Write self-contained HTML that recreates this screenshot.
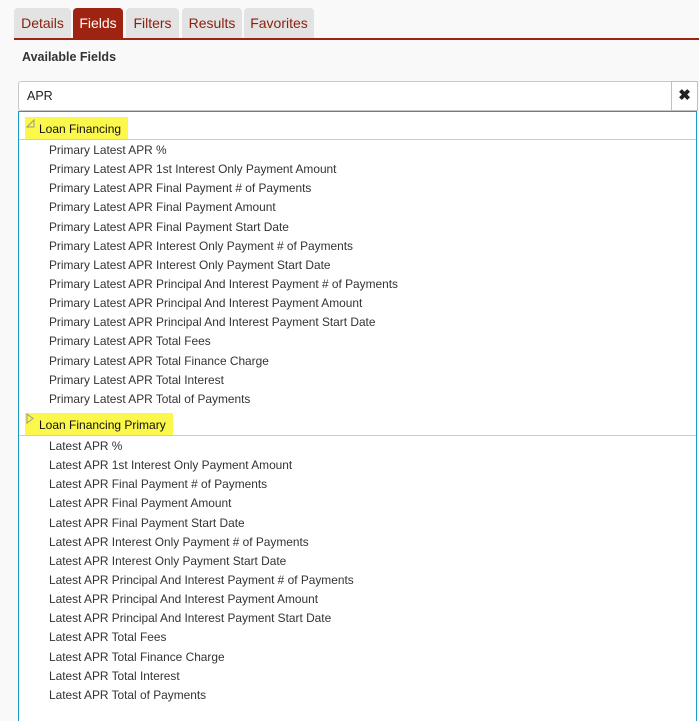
<!DOCTYPE html>
<html><head><style>
*{margin:0;padding:0;box-sizing:border-box}
body{width:699px;height:710px;overflow:hidden;background:#f9f9f9;font-family:"Liberation Sans",sans-serif;position:relative}
.tab{position:absolute;top:8px;height:30px;background:#e3e3e3;border-radius:4px 4px 0 0;color:#8b1f0e;font-size:14px;line-height:30px;text-align:center}
.tab.a{background:#9e2411;color:#fff}
.rule{position:absolute;left:14px;top:38px;width:685px;height:2px;background:#9e2411}
.lbl{position:absolute;left:22px;top:50px;font-size:12.5px;font-weight:bold;color:#333}
.inp{position:absolute;left:18px;top:81px;width:654px;height:30px;background:#fff;border:1px solid #c8c8c8;border-radius:3px 0 0 3px;font-size:12.5px;line-height:29px;padding-left:8px;color:#222}
.x{position:absolute;left:671px;top:81px;width:27px;height:30px;background:#fff;border:1px solid #c0c0c0;font-size:15px;font-weight:bold;text-align:center;line-height:28px;color:#222}
.list{position:absolute;left:18px;top:111px;width:679px;height:610px;background:#fff;border:1px solid #1a9bc7;border-bottom:none}
.h{height:28px;border-bottom:1px solid #ccc;position:relative}
.h span{position:absolute;left:6px;top:5px;height:22px;background:#fbf74b;padding:0 7px 0 14px;font-size:12px;line-height:24px;color:#111}
.h svg{position:absolute;left:7px;top:7px}
.it{height:19.15px;line-height:21px;padding-left:30px;font-size:11.9px;color:#333}
</style></head><body>
<div class="tab" style="left:14px;width:57px">Details</div>
<div class="tab a" style="left:73px;width:50px">Fields</div>
<div class="tab" style="left:126px;width:53px">Filters</div>
<div class="tab" style="left:182px;width:60px">Results</div>
<div class="tab" style="left:244px;width:70px">Favorites</div>
<div class="rule"></div>
<div class="lbl">Available Fields</div>
<div class="inp">APR</div>
<div class="x">✖</div>
<div class="list">
<div class="h"><span>Loan Financing</span><svg width="9" height="9"><path d="M8 1 L8 8 L1 8 Z" fill="none" stroke="#999" stroke-width="1"/></svg></div>
<div class="it">Primary Latest APR %</div>
<div class="it">Primary Latest APR 1st Interest Only Payment Amount</div>
<div class="it">Primary Latest APR Final Payment # of Payments</div>
<div class="it">Primary Latest APR Final Payment Amount</div>
<div class="it">Primary Latest APR Final Payment Start Date</div>
<div class="it">Primary Latest APR Interest Only Payment # of Payments</div>
<div class="it">Primary Latest APR Interest Only Payment Start Date</div>
<div class="it">Primary Latest APR Principal And Interest Payment # of Payments</div>
<div class="it">Primary Latest APR Principal And Interest Payment Amount</div>
<div class="it">Primary Latest APR Principal And Interest Payment Start Date</div>
<div class="it">Primary Latest APR Total Fees</div>
<div class="it">Primary Latest APR Total Finance Charge</div>
<div class="it">Primary Latest APR Total Interest</div>
<div class="it">Primary Latest APR Total of Payments</div>
<div class="h"><span>Loan Financing Primary</span><svg width="9" height="11" style="top:5px"><path d="M1 1 L7 5.5 L1 10 Z" fill="none" stroke="#999" stroke-width="1"/></svg></div>
<div class="it">Latest APR %</div>
<div class="it">Latest APR 1st Interest Only Payment Amount</div>
<div class="it">Latest APR Final Payment # of Payments</div>
<div class="it">Latest APR Final Payment Amount</div>
<div class="it">Latest APR Final Payment Start Date</div>
<div class="it">Latest APR Interest Only Payment # of Payments</div>
<div class="it">Latest APR Interest Only Payment Start Date</div>
<div class="it">Latest APR Principal And Interest Payment # of Payments</div>
<div class="it">Latest APR Principal And Interest Payment Amount</div>
<div class="it">Latest APR Principal And Interest Payment Start Date</div>
<div class="it">Latest APR Total Fees</div>
<div class="it">Latest APR Total Finance Charge</div>
<div class="it">Latest APR Total Interest</div>
<div class="it">Latest APR Total of Payments</div>
</div>
</body></html>
